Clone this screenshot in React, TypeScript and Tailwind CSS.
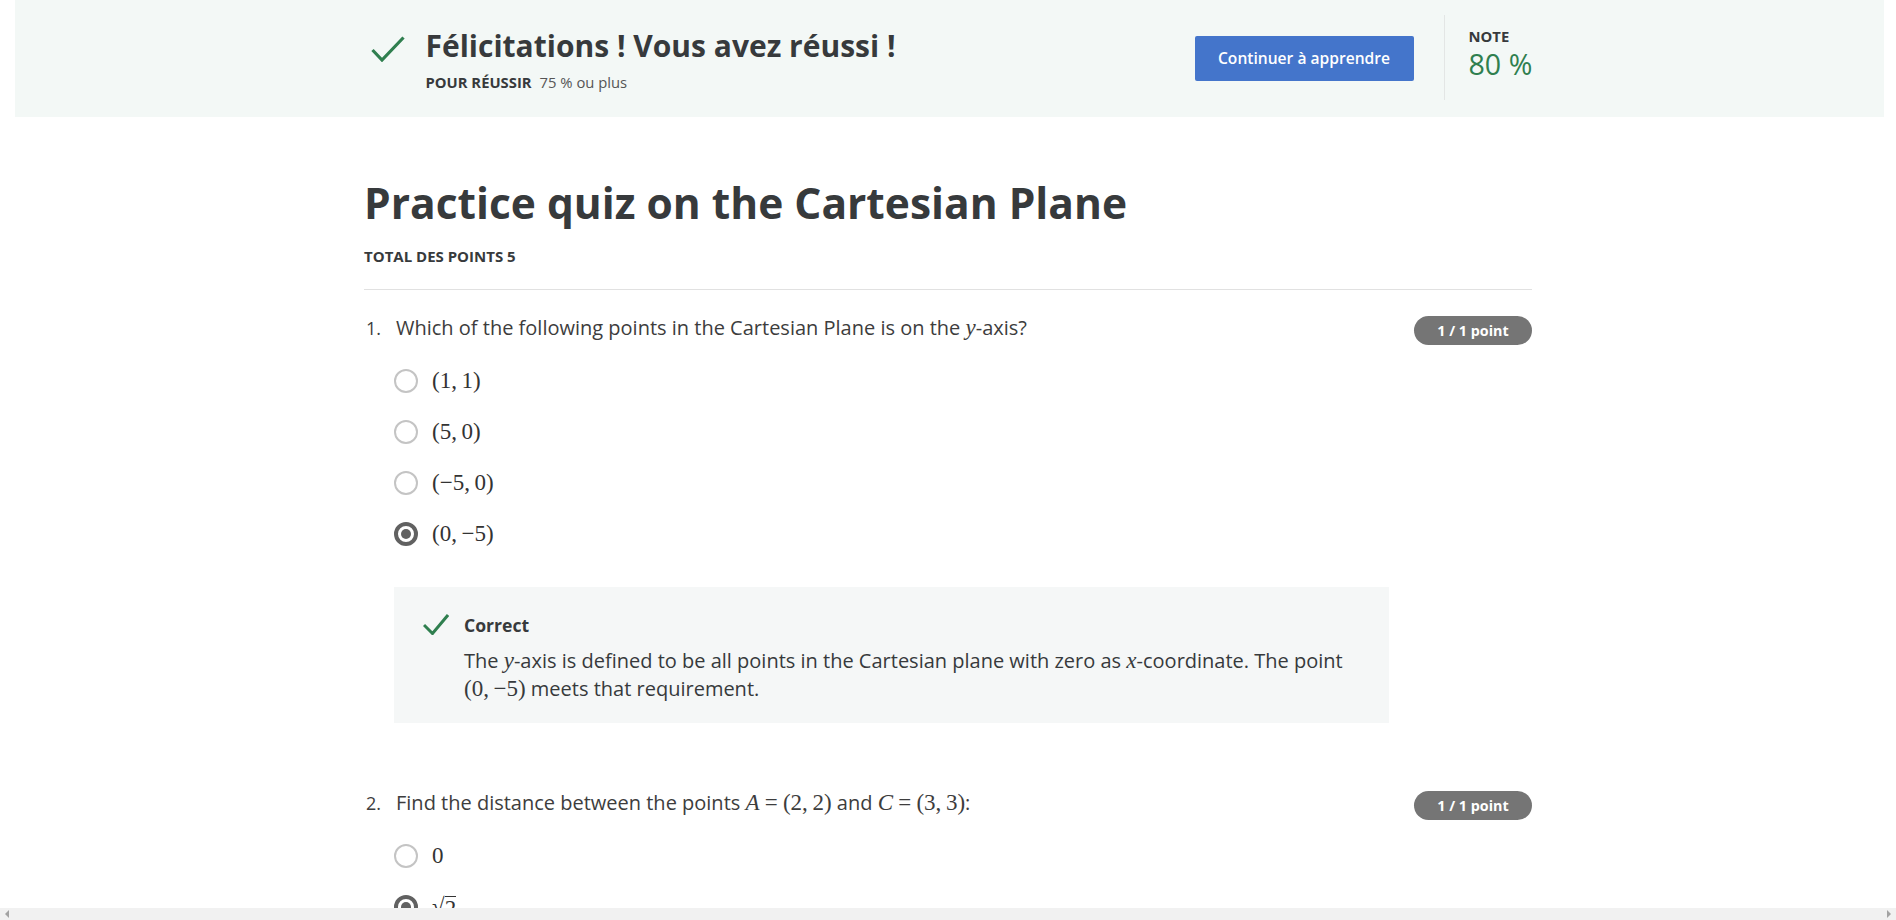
import React from "react";

function Check({ className }: { className?: string }) {
  return (
    <svg viewBox="0 0 34 26" className={className} fill="none">
      <polyline points="1.5,14 11,24 32.5,1.5" stroke="#2f7f4f" strokeWidth="3.2" strokeLinecap="butt" strokeLinejoin="miter" />
    </svg>
  );
}

function SmallCheck() {
  return (
    <svg viewBox="0 0 26 21" className="h-[21px] w-[26px] shrink-0" fill="none">
      <polyline points="1,11 9.5,19.5 25,1" stroke="#2f7f4f" strokeWidth="3" />
    </svg>
  );
}

function M({ children }: { children: React.ReactNode }) {
  return <span className="font-['Liberation_Serif',serif] text-[23px]">{children}</span>;
}

function V({ children }: { children: React.ReactNode }) {
  return <span className="font-['Liberation_Serif',serif] text-[23px] italic">{children}</span>;
}

function Radio({ checked }: { checked?: boolean }) {
  return checked ? (
    <span className="flex h-[24px] w-[24px] shrink-0 items-center justify-center rounded-full border-[4px] border-[#616161]">
      <span className="h-[10px] w-[10px] rounded-full bg-[#616161]" />
    </span>
  ) : (
    <span className="h-[24px] w-[24px] shrink-0 rounded-full border-2 border-[#c4c4c4]" />
  );
}

function Option({ checked, children }: { checked?: boolean; children: React.ReactNode }) {
  return (
    <div className="flex h-[51px] items-center gap-[14px]">
      <Radio checked={checked} />
      <div className="text-[#333]">{children}</div>
    </div>
  );
}

function Badge() {
  return (
    <span className="mt-[2px] flex h-[29px] w-[118px] shrink-0 items-center justify-center rounded-full bg-[#757575] text-[14.3px] font-bold text-white">
      1 / 1 point
    </span>
  );
}

export default function App() {
  return (
    <div className="flex h-[920px] w-full flex-col overflow-hidden bg-white font-['Open_Sans',sans-serif] text-[#373a3c]">
      <div className="flex-1 overflow-hidden">
        <header className="ml-[15px] mr-[12px] h-[117px] bg-[#f3f8f6]">
          <div className="mx-auto flex w-[1168px] items-start justify-between">
            <div className="mt-[28px] flex items-start pl-[5px]">
              <Check className="mt-[8px] h-[26px] w-[34px] shrink-0" />
              <div className="ml-[21px]">
                <h1 className="text-[30px] font-bold leading-[36px] text-[#373a3c]">Félicitations ! Vous avez réussi !</h1>
                <p className="mt-[8px] text-[14.8px] leading-[20px]">
                  <span className="font-bold">POUR RÉUSSIR</span>
                  <span className="ml-[8px] text-[#555]">75 % ou plus</span>
                </p>
              </div>
            </div>
            <div className="flex items-start">
              <button className="mt-[36px] flex h-[45px] w-[219px] items-center justify-center rounded-[2px] bg-[#4475cb] text-[15.6px] font-semibold text-white">
                Continuer à apprendre
              </button>
              <div className="ml-[30px] mt-[15px] h-[85px] w-px bg-[#e3e6e5]" />
              <div className="ml-[24px] mt-[26px] w-[65px]">
                <div className="text-[14.8px] font-bold leading-[20px]">NOTE</div>
                <div className="mt-[2px] text-[28.6px] leading-[31px] text-[#2f7f4f]">80 %</div>
              </div>
            </div>
          </div>
        </header>

        <main className="mx-auto w-[1168px]">
          <h2 className="mt-[60px] text-[42.5px] font-bold leading-[52px] text-[#373a3c]">Practice quiz on the Cartesian Plane</h2>
          <div className="mt-[17px] text-[15px] font-bold leading-[20px]">TOTAL DES POINTS 5</div>
          <div className="mt-[23px] h-px bg-[#e1e1e1]" />

          <section className="mt-[24px] flex items-start text-[20px] leading-[28px] text-[#3d3d3d]">
            <div className="w-[32px] pl-[2px] text-[18px]">1.</div>
            <div className="flex-1">
              <div className="flex items-start justify-between">
                <p>
                  Which of the following points in the Cartesian Plane is on the <V>y</V>-axis?
                </p>
                <Badge />
              </div>
              <div className="-ml-[2px] mt-[10px]">
                <Option><M>(1,&thinsp;1)</M></Option>
                <Option><M>(5,&thinsp;0)</M></Option>
                <Option><M>(−5,&thinsp;0)</M></Option>
                <Option checked><M>(0,&thinsp;−5)</M></Option>
              </div>
              <div className="-ml-[2px] mt-[28px] w-[995px] bg-[#f5f7f7] pb-[20px] pl-[29px] pr-[24px] pt-[26px]">
                <div className="flex items-start gap-[15px]">
                  <div className="mt-[1px]">
                    <SmallCheck />
                  </div>
                  <div>
                    <div className="text-[17.6px] font-bold leading-[24px] text-[#373a3c]">Correct</div>
                    <p className="mt-[10px] text-[20px] leading-[28px] text-[#373a3c]">
                      The <V>y</V>-axis is defined to be all points in the Cartesian plane with zero as <V>x</V>-coordinate. The point{" "}
                      <M>(0,&thinsp;−5)</M> meets that requirement.
                    </p>
                  </div>
                </div>
              </div>
            </div>
          </section>

          <section className="mt-[66px] flex items-start text-[20px] leading-[28px] text-[#3d3d3d]">
            <div className="w-[32px] pl-[2px] text-[18px]">2.</div>
            <div className="flex-1">
              <div className="flex items-start justify-between">
                <p>
                  Find the distance between the points <V>A</V> <M>=</M> <M>(2,&thinsp;2)</M> and <V>C</V> <M>=</M>{" "}
                  <M>(3,&thinsp;3)</M>:
                </p>
                <Badge />
              </div>
              <div className="-ml-[2px] mt-[10px]">
                <Option><M>0</M></Option>
                <Option checked>
                  <span className="flex items-end font-['Liberation_Serif',serif] text-[23px]">
                    <span>√</span>
                    <span className="border-t border-[#333] leading-[24px]">2</span>
                  </span>
                </Option>
              </div>
            </div>
          </section>
        </main>
      </div>
      <div className="flex h-[12px] shrink-0 items-center justify-between bg-[#f1f1f1] px-[5px]">
        <span className="h-0 w-0 border-y-[4px] border-r-[4px] border-y-transparent border-r-[#a3a3a3]" />
        <span className="h-0 w-0 border-y-[4px] border-l-[4px] border-y-transparent border-l-[#a3a3a3]" />
      </div>
    </div>
  );
}
